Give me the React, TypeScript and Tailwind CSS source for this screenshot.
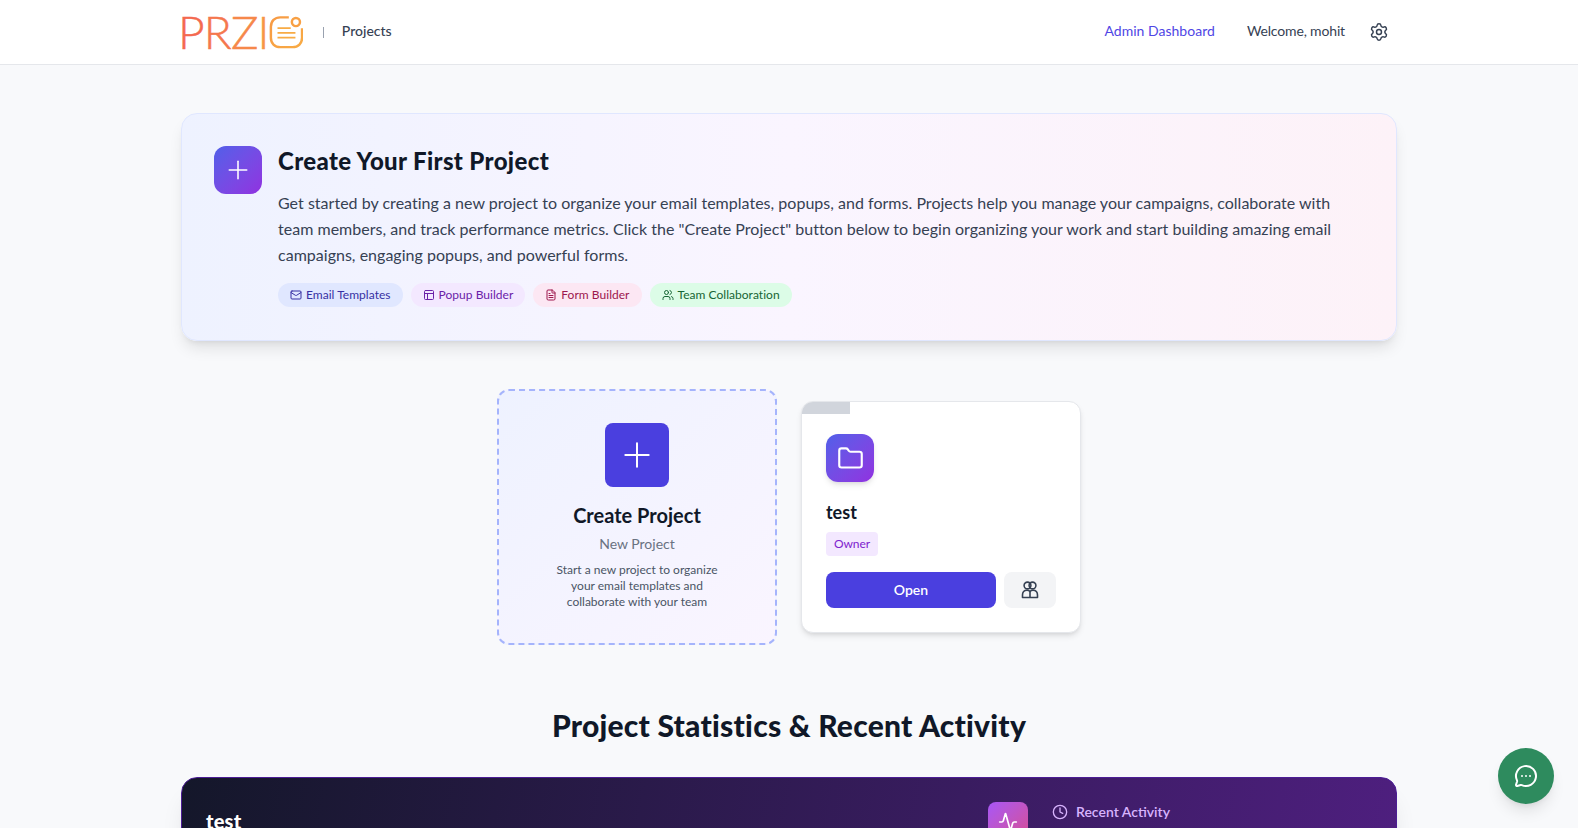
import React from "react";
import { Plus, Settings, Mail, PanelsTopLeft, FileText, Users, Folder, MessageCircleMore, Clock, Activity } from "lucide-react";

function Logo() {
  return (
    <div className="flex items-center h-[34px] -ml-[3px]">
      <span className="font-light text-[46px] leading-[34px] tracking-[-0.8px] [-webkit-text-stroke:0.5px_currentColor]">
        <span className="text-[#f4694f]">P</span>
        <span className="text-[#f5774d]">R</span>
        <span className="text-[#f6884a]">Z</span>
        <span className="text-[#f79546]">I</span>
      </span>
      <svg width="34" height="34" viewBox="0 0 36 36" fill="none">
        <defs>
          <linearGradient id="lg" x1="0" y1="0" x2="1" y2="1">
            <stop offset="0" stopColor="#f79a45" />
            <stop offset="1" stopColor="#f8ab44" />
          </linearGradient>
        </defs>
        <path d="M21 2.5H12C6 2.5 2 6.5 2 12.5V24C2 30 6 34 12 34H25C31 34 35 30 35 24V14" stroke="url(#lg)" strokeWidth="2.6" />
        <circle cx="28.5" cy="7.5" r="4.3" stroke="#f8a044" strokeWidth="2.6" />
        <path d="M9 14H23M9 19H28M9 24H28" stroke="#f8ab44" strokeWidth="1.8" />
      </svg>
    </div>
  );
}

function TeamIcon() {
  return (
    <svg width="20" height="20" viewBox="0 0 20 20" fill="none" stroke="currentColor" strokeWidth="1.6">
      <circle cx="7.5" cy="5.5" r="3.4" />
      <circle cx="12.5" cy="5.5" r="3.4" />
      <path d="M2.5 17.5V15C2.5 12 4.5 10.2 7 10.2C8.4 10.2 9.4 10.8 10 11.6C10.6 10.8 11.6 10.2 13 10.2C15.5 10.2 17.5 12 17.5 15V17.5H2.5Z" strokeLinejoin="round" />
      <path d="M10 11.6V17.5" />
    </svg>
  );
}

function Chip({ icon, label, cls }: { icon: React.ReactNode; label: string; cls: string }) {
  return (
    <span className={`inline-flex items-center gap-1 h-6 px-3 rounded-full text-xs font-normal tracking-[0.03px] ${cls}`}>
      {icon}
      {label}
    </span>
  );
}

export default function App() {
  return (
    <div className="relative h-screen overflow-hidden bg-[#f8f9fb] font-['Lato','Liberation_Sans',sans-serif]">
      <header className="bg-white border-b border-gray-200 h-[65px]">
        <div className="mx-auto max-w-7xl px-8 h-full flex items-center justify-between">
          <div className="flex items-center">
            <Logo />
            <span className="ml-[20px] w-px h-[11px] bg-gray-400" />
            <span className="ml-[18px] -mt-[2px] text-sm font-medium text-gray-700">Projects</span>
          </div>
          <div className="flex items-center">
            <span className="-mt-[2px] text-sm font-normal tracking-[0.02px] text-[#4f46e5]">Admin Dashboard</span>
            <span className="ml-8 -mt-[2px] text-sm font-normal tracking-[-0.15px] text-gray-700">Welcome, mohit</span>
            <span className="ml-4 p-2 text-gray-700"><Settings size={20} strokeWidth={1.75} /></span>
          </div>
        </div>
      </header>

      <main className="mx-auto max-w-7xl px-8 pt-12">
        <section className="rounded-2xl border border-indigo-100 bg-gradient-to-r from-[#eef2ff] via-[#faf5ff] to-[#fdf2f8] pt-8 px-8 pb-[33px] shadow-lg flex gap-4">
          <div className="w-12 h-12 shrink-0 rounded-xl bg-gradient-to-br from-[#4f5fe9] to-[#9030e0] flex items-center justify-center text-white">
            <Plus size={30} strokeWidth={1.25} />
          </div>
          <div className="flex-1">
            <h2 className="text-2xl font-black text-gray-900 leading-[30px] tracking-[0.35px]">Create Your First Project</h2>
            <p className="mt-[14px] text-base leading-[26px] tracking-[0.02px] text-gray-700">
              Get started by creating a new project to organize your email templates, popups, and forms. Projects help you manage your campaigns, collaborate with team members, and track performance metrics. Click the "Create Project" button below to begin organizing your work and start building amazing email campaigns, engaging popups, and powerful forms.
            </p>
            <div className="mt-[15px] flex gap-2">
              <Chip cls="bg-[#e0e7ff] text-[#3730a3]" label="Email Templates" icon={<Mail size={12} />} />
              <Chip cls="bg-[#f3e8ff] text-[#6b21a8]" label="Popup Builder" icon={<PanelsTopLeft size={12} />} />
              <Chip cls="bg-[#fce7f3] text-[#9d174d]" label="Form Builder" icon={<FileText size={12} />} />
              <Chip cls="bg-[#dcfce7] text-[#166534]" label="Team Collaboration" icon={<Users size={12} />} />
            </div>
          </div>
        </section>

        <div className="mt-12 flex justify-center items-center gap-6">
          <div className="w-[280px] h-[256px] rounded-xl border-2 border-dashed border-[#a5b4fc] bg-gradient-to-br from-[#eef2ff] to-[#faf5ff] pt-8 flex flex-col items-center text-center">
            <div className="w-16 h-16 rounded-lg bg-[#4a3fdf] flex items-center justify-center text-white">
              <Plus size={40} strokeWidth={1.2} />
            </div>
            <h3 className="mt-[14px] text-xl font-bold leading-7 text-gray-900">Create Project</h3>
            <p className="mt-[5px] text-sm leading-5 text-gray-500">New Project</p>
            <p className="mt-2 text-xs leading-4 text-gray-600 w-[170px]">Start a new project to organize your email templates and collaborate with your team</p>
          </div>

          <div className="relative w-[280px] h-[232px] rounded-xl border border-gray-200 bg-white shadow-md p-6 overflow-hidden">
            <div className="absolute left-0 top-0 w-12 h-3 bg-gray-300" />
            <div className="mt-2 w-12 h-12 rounded-xl bg-gradient-to-br from-[#4f5fe9] to-[#9030e0] flex items-center justify-center text-white shadow-md">
              <Folder size={27} strokeWidth={1.9} />
            </div>
            <h3 className="mt-4 text-lg font-bold leading-7 text-gray-900">test</h3>
            <span className="mt-[6px] inline-flex h-6 px-2 items-center rounded text-xs font-normal tracking-[-0.1px] bg-[#f3e8ff] text-[#7e22ce]">Owner</span>
            <div className="mt-4 flex gap-2">
              <button className="flex-1 h-9 rounded-lg bg-[#4a3fdf] text-white text-sm font-semibold">Open</button>
              <button className="w-[52px] h-9 rounded-lg bg-gray-100 flex items-center justify-center text-gray-700">
                <TeamIcon />
              </button>
            </div>
          </div>
        </div>

        <h2 className="mt-[62px] text-3xl font-black text-gray-900 text-center leading-9 tracking-[0.23px]">Project Statistics &amp; Recent Activity</h2>

        <section className="mt-[34px] h-[200px] rounded-2xl border border-[#4c1d95] bg-[linear-gradient(100deg,#14172a,#4f1f80)] shadow-xl p-6 flex">
          <div className="flex-1 pt-[5px]">
            <h3 className="text-xl font-black tracking-[0.2px] text-white">test</h3>
          </div>
          <div className="w-[384px] flex gap-6">
            <div className="w-10 h-10 rounded-lg bg-gradient-to-br from-[#a855f7] to-[#d9488f] flex items-center justify-center text-white">
              <Activity size={20} />
            </div>
            <div className="flex items-center h-5 gap-2 text-[#d8b4fe] text-sm font-semibold">
              <Clock size={16} />
              Recent Activity
            </div>
          </div>
        </section>
      </main>

      <button className="absolute right-[24px] bottom-[24px] w-14 h-14 rounded-full bg-[#2e8b5e] shadow-lg flex items-center justify-center text-white">
        <MessageCircleMore size={24} />
      </button>
    </div>
  );
}
